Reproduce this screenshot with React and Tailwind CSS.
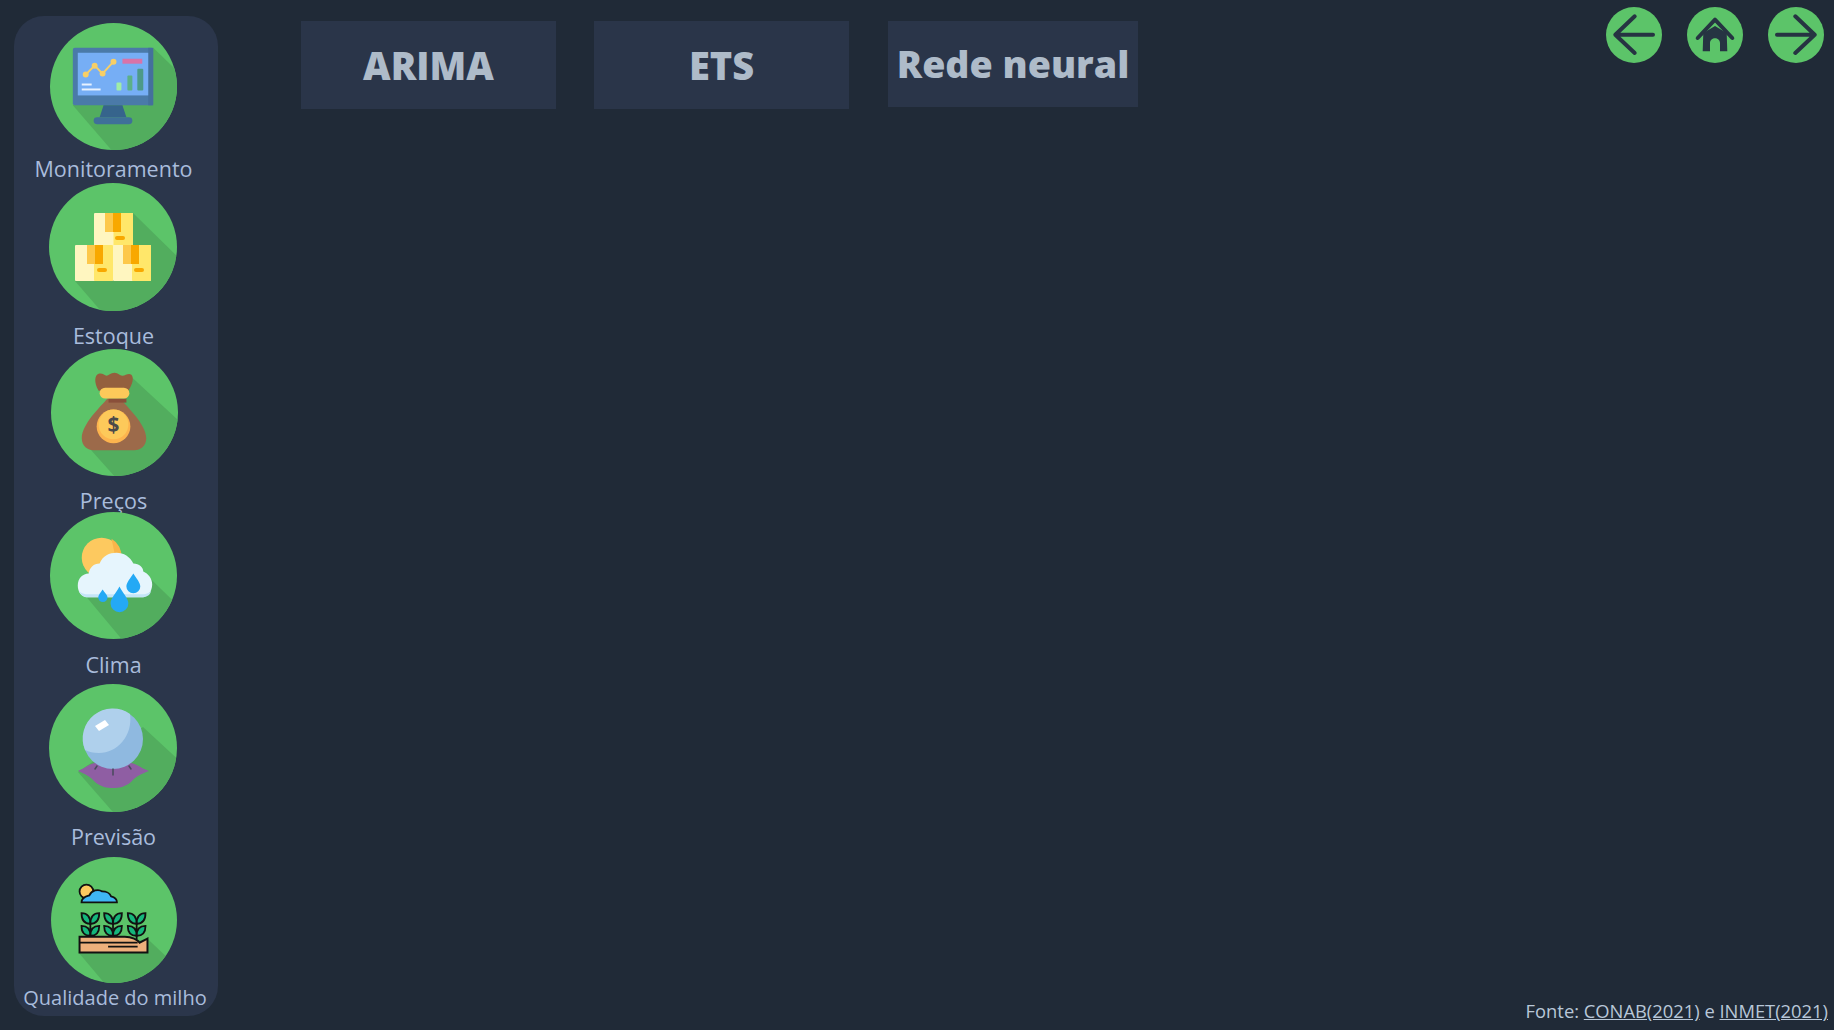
import React from "react";

const IconCircle = ({ id, shadow, size, children }) => (
  <svg viewBox="0 0 128 128" className={size}>
    <clipPath id={id}>
      <circle cx="64" cy="64" r="64" />
    </clipPath>
    <circle cx="64" cy="64" r="64" fill="#5cc469" />
    <polygon points={shadow} fill="#52ad5e" clipPath={`url(#${id})`} />
    {children}
  </svg>
);

const Monitor = () => (
  <IconCircle id="c1" size="w-[127px] h-[127px]" shadow="104,25 135,55 135,135 68,135 23,83">
    <rect x="23" y="25" width="81" height="58" rx="2" fill="#4a7aa8" />
    <rect x="99" y="25" width="5" height="58" fill="#44709c" />
    <rect x="28" y="30" width="71" height="43" fill="#76aef5" />
    <polygon points="54,83 73,83 77,95 50,95" fill="#36648c" />
    <rect x="44" y="95" width="39" height="7" rx="3.5" fill="#3f7099" />
    <polyline points="36,52 45,43 53,51 64,39" fill="none" stroke="#f8cf66" strokeWidth="2" />
    <circle cx="36" cy="52" r="3" fill="#f8cf66" />
    <circle cx="45" cy="43" r="3" fill="#f8cf66" />
    <circle cx="53" cy="51" r="3" fill="#f8cf66" />
    <circle cx="64" cy="39" r="3" fill="#f8cf66" />
    <rect x="73" y="36" width="20" height="5" fill="#d873a8" />
    <rect x="67" y="60" width="5" height="8" rx="1" fill="#a0eda6" />
    <rect x="78" y="53" width="5" height="15" rx="1" fill="#5cb087" />
    <rect x="88" y="46" width="6" height="22" rx="1" fill="#4d9a88" />
    <rect x="32" y="61" width="10" height="2" fill="#e8f2ff" />
    <rect x="32" y="66" width="19" height="2" fill="#e8f2ff" />
  </IconCircle>
);

const Box = ({ x, y, w, h, tapeX, tapeW, tapeH, labelX, labelY }) => (
  <g>
    <rect x={x} y={y} width={w} height={h} rx="1" fill="#fff6c0" />
    <rect x={x + w / 2} y={y} width={w / 2} height={h} rx="1" fill="#ffe76a" />
    <rect x={tapeX} y={y} width={tapeW / 2} height={tapeH} fill="#fdc84a" />
    <rect x={tapeX + tapeW / 2} y={y} width={tapeW / 2} height={tapeH} fill="#f8a800" />
    <rect x={labelX} y={labelY} width="10" height="4" rx="2" fill="#f8a800" />
  </g>
);

const Boxes = () => (
  <IconCircle id="c2" size="w-[128px] h-[128px]" shadow="84,30 135,80 135,135 58,135 26,98">
    <Box x={45} y={30} w={39} h={33} tapeX={56} tapeW={16} tapeH={19} labelX={66} labelY={53} />
    <Box x={26} y={62} w={38} h={36} tapeX={38} tapeW={16} tapeH={19} labelX={48} labelY={85} />
    <Box x={64} y={62} w={38} h={36} tapeX={74} tapeW={16} tapeH={19} labelX={85} labelY={85} />
  </IconCircle>
);

const Bag = () => (
  <IconCircle id="c3" size="w-[127px] h-[127px]" shadow="82,29 135,78 135,135 70,135 36,97">
    <path d="M48 42 C43 34 44 26 48 25 C52 24 54 27 56 27 C58 27 60 24 64 24 C68 24 69 27 72 27 C75 27 78 24 81 26 C84 29 82 36 78 42 Z" fill="#94603e" />
    <path d="M57 50 L70 50 C76 58 96 76 96 90 C96 98 90 102 84 102 L43 102 C37 102 31 98 31 90 C31 76 50 58 57 50 Z" fill="#9c6a4a" />
    <rect x="58" y="50" width="18" height="4" fill="#8a4f3a" />
    <rect x="49" y="39" width="30" height="11" rx="5.5" fill="#fdc95a" />
    <circle cx="63" cy="78" r="17" fill="#fdb44e" />
    <circle cx="63" cy="76" r="15" fill="#fdc95a" />
    <text x="63" y="84" textAnchor="middle" fontSize="21" fontWeight="700" fill="#4a4a4a" fontFamily="'Open Sans', sans-serif">$</text>
  </IconCircle>
);

const Weather = () => (
  <IconCircle id="c4" size="w-[127px] h-[127px]" shadow="101,67 135,100 135,135 78,135 37,86">
    <circle cx="52" cy="46" r="20" fill="#fdc95f" />
    <path d="M62 27 A20 20 0 0 1 72 46 L66 46 Z" fill="#f9b54a" />
    <path d="M39 86 C31 86 28 80 28 74 C28 67 33 62 39 62 C40 56 44 52 50 52 C53 44 60 41 67 41 C74 41 81 45 84 52 C90 52 94 56 94 60 C99 62 103 67 103 73 C103 80 98 86 92 86 Z" fill="#e6f5fd" />
    <path d="M29 79 C31 84 35 86 39 86 L92 86 C97 86 101 84 102 79 C100 82 96 83 92 83 L39 83 C35 83 31 82 29 79 Z" fill="#c4e5f7" />
    <path d="M84 62 C87 67 91 71 91 75 A7 7 0 0 1 77 75 C77 71 81 67 84 62 Z" fill="#24a9f5" />
    <path d="M70 75 C73 81 79 87 79 92 A9 9 0 0 1 61 92 C61 87 67 81 70 75 Z" fill="#24a9f5" />
    <path d="M53 78 C55 81 58 84 58 86 A4.7 4.7 0 0 1 48.600 86 C48.600 84 51 81 53 78 Z" fill="#24a9f5" />
  </IconCircle>
);

const Crystal = () => (
  <IconCircle id="c5" size="w-[128px] h-[128px]" shadow="94,43 135,81 135,135 70,135 29,88">
    <path d="M29 87 C36 84 40 80 46 79 L82 79 C88 80 92 84 100 87 C92 90 87 92 82 98 C76 103 70 104 64 104 C58 104 52 103 46 98 C41 92 36 90 29 87 Z" fill="#8f5ea3" />
    <circle cx="64" cy="55" r="30" fill="#8fb9e0" />
    <path d="M81 30 A30 30 0 0 0 36 66 C40 68 44 69 50 69 C68 69 84 52 81 30 Z" fill="#afd0ec" />
    <polygon points="46,42 56,36 60,41 50,47" fill="#ffffff" />
    <path d="M46 85 L48 82 M64 85 L64 91 M82 85 L80 82" stroke="#4a4a5e" strokeWidth="1.500" strokeLinecap="round" />
  </IconCircle>
);

const Sprout = ({ x }) => (
  <g stroke="#111" strokeWidth="1.800" fill="#15b67c">
    <path d={`M${x} 84 L${x} 64`} fill="none" />
    <path d={`M${x} 68 C${x - 9} 68 ${x - 9} 60 ${x - 9} 57 C${x - 2} 57 ${x} 62 ${x} 68 Z`} />
    <path d={`M${x} 68 C${x + 9} 68 ${x + 9} 60 ${x + 9} 57 C${x + 2} 57 ${x} 62 ${x} 68 Z`} />
    <path d={`M${x} 80 C${x - 9} 80 ${x - 9} 73 ${x - 9} 70 C${x - 2} 70 ${x} 74 ${x} 80 Z`} />
    <path d={`M${x} 80 C${x + 9} 80 ${x + 9} 73 ${x + 9} 70 C${x + 2} 70 ${x} 74 ${x} 80 Z`} />
  </g>
);

const Field = () => (
  <IconCircle id="c6" size="w-[126px] h-[126px]" shadow="98,83 135,118 135,135 60,135 28,97">
    <circle cx="36" cy="35" r="7" fill="#fdc95f" stroke="#111" strokeWidth="1.800" />
    <path d="M31 46 C31 41 36 40 39 39 C41 34 48 32 52 35 C56 35 60 37 61 40 C65 41 67 43 67 46 Z" fill="#3fb6f5" stroke="#111" strokeWidth="1.800" />
    <Sprout x={40} />
    <Sprout x={63} />
    <Sprout x={87} />
    <path d="M29 81 L75 81 C82 81 88 84 90 87 L98 83 L98 97 L29 97 Z" fill="#eeb07c" stroke="#111" strokeWidth="2" />
    <path d="M29 87 L88 87 M58 91 L88 91" stroke="#111" strokeWidth="1.800" />
  </IconCircle>
);

const navItems = [
  { label: "Monitoramento", icon: <Monitor />, item: "mt-0", shift: "mr-0", gap: "mt-[7px] text-[21.500px]" },
  { label: "Estoque", icon: <Boxes />, item: "mt-[2px]", shift: "mr-[2px]", gap: "mt-[13px] text-[21.500px]" },
  { label: "Preços", icon: <Bag />, item: "mt-[1px]", shift: "ml-[2px]", gap: "mt-[13px] text-[21.500px]" },
  { label: "Clima", icon: <Weather />, item: "-mt-[1px]", shift: "mr-0", gap: "mt-[14px] text-[21.500px]" },
  { label: "Previsão", icon: <Crystal />, item: "mt-[7px]", shift: "mr-[2px]", gap: "mt-[13px] text-[21.500px]" },
  { label: "Qualidade do milho", icon: <Field />, item: "mt-[8px]", shift: "ml-[2px]", gap: "mt-[3px] ml-[3px] text-[20px]" },
];

const Sidebar = () => (
  <div className="ml-[14px] mt-[16px] flex h-[1000px] w-[204px] shrink-0 flex-col items-center rounded-[30px] bg-[#2b364b] pr-[5px] pt-[7px]">
    {navItems.map((n) => (
      <div key={n.label} className={`flex flex-col items-center ${n.item}`}>
        <div className={`flex ${n.shift}`}>{n.icon}</div>
        <div className={`h-[24px] whitespace-nowrap leading-[24px] text-[#a9bcdc] ${n.gap}`}>
          {n.label}
        </div>
      </div>
    ))}
  </div>
);

const Tab = ({ children, className }) => (
  <div className={`flex items-center justify-center bg-[#2a3549] font-extrabold text-[#aebbc9] ${className}`}>
    {children}
  </div>
);

const RoundButton = ({ children }) => (
  <div className="h-[56px] w-[56px] rounded-full bg-[#5cc469]">
    <svg viewBox="0 0 56 56" className="h-full w-full" fill="none" stroke="#263442" strokeWidth="4" strokeLinecap="round" strokeLinejoin="round">
      {children}
    </svg>
  </div>
);

export default function App() {
  return (
    <div className="flex h-screen bg-[#202a37] font-['Open_Sans',sans-serif]">
      <Sidebar />
      <div className="flex min-w-0 flex-1 flex-col pb-[7px]">
        <div className="flex items-start justify-between pl-[83px] pr-[10px]">
          <div className="mt-[21px] flex gap-[38px]">
            <Tab className="h-[88px] w-[255px] text-[38px]">ARIMA</Tab>
            <Tab className="h-[88px] w-[255px] text-[38px]">ETS</Tab>
            <Tab className="ml-[1px] h-[86px] w-[250px] text-[37.600px]">Rede neural</Tab>
          </div>
          <div className="mt-[7px] flex gap-[25px]">
            <RoundButton>
              <path d="M47 27.700 L9.300 27.700 M28.700 9.300 L9.300 27.700 L28.700 46" />
            </RoundButton>
            <RoundButton>
              <path d="M10.700 31 L28 12.700 L45.300 31" />
              <path d="M16.300 26 L28 19 L39.700 26 L40.300 44.300 L33 44.300 L33 36 C33 29.500 23 29.500 23 36 L23 44.300 L15.700 44.300 Z" fill="#263442" stroke="none" />
            </RoundButton>
            <RoundButton>
              <path d="M9 27.700 L46.700 27.700 M27.300 9.300 L46.700 27.700 L27.300 46" />
            </RoundButton>
          </div>
        </div>
        <div className="mt-auto pr-[6px] text-right text-[18.350px] leading-[25px] text-[#b8c7d8]">
          Fonte: <a className="underline">CONAB(2021)</a> e <a className="underline">INMET(2021)</a>
        </div>
      </div>
    </div>
  );
}
